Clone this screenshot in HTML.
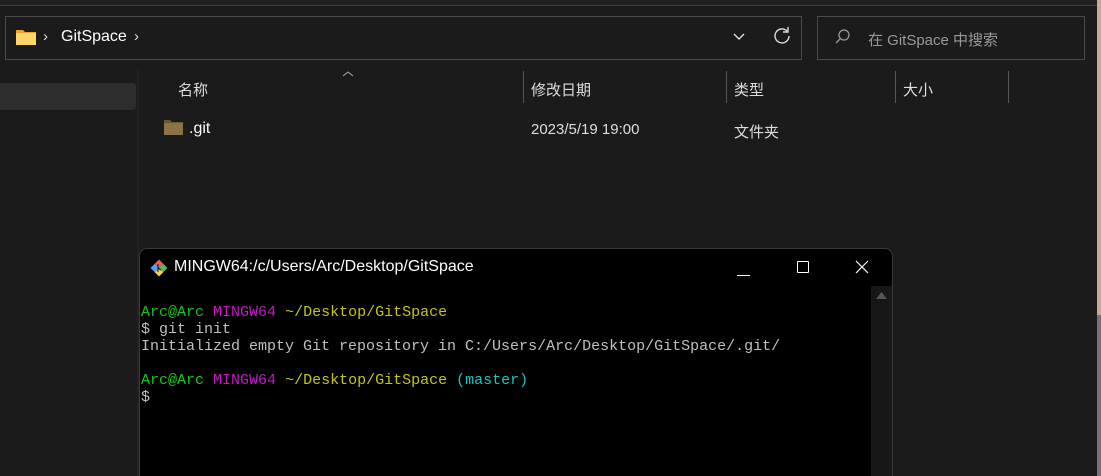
<!DOCTYPE html>
<html style="overflow:hidden;width:1101px;height:476px"><head><meta charset="utf-8"><style>
*{margin:0;padding:0;box-sizing:border-box}
body{width:1101px;height:476px;background:#1b1b1b;position:relative;overflow:hidden;font-family:"Segoe UI","Liberation Sans","Noto Sans CJK SC",sans-serif;color:#fff}
.abs{position:absolute}
.t{font-size:14px;white-space:nowrap}
.mono{font-family:"Liberation Mono","DejaVu Sans Mono",monospace;font-size:15px;line-height:17px;white-space:pre}
</style></head><body>
<div class="abs" style="left:0;top:0;width:1101px;height:5px;background:#202020"></div>
<div class="abs" style="left:0;top:5px;width:1097px;height:1px;background:#3a3a3a"></div>
<div class="abs" style="left:1097px;top:0;width:4px;height:315px;background:#c7a995"></div>
<div class="abs" style="left:1097px;top:315px;width:4px;height:161px;background:#7a7078"></div>
<div class="abs" style="left:5px;top:16px;width:797px;height:44px;border:1px solid #4a4a4a;background:#1b1b1b"></div>
<svg class="abs" style="left:16px;top:29px" width="20" height="17" viewBox="0 0 20 17"><path d="M0 1h7l2 2h11v13H0z" fill="#e8a92b"/><rect x="0" y="4" width="20" height="12" fill="#fcd66a"/></svg>
<div class="abs t" style="left:43px;top:28px;color:#ddd;font-size:15px">›</div>
<div class="abs t" style="left:61px;top:28px;font-size:16px;color:#fff">GitSpace</div>
<div class="abs t" style="left:134px;top:28px;color:#ddd;font-size:15px">›</div>
<svg class="abs" style="left:732px;top:32px" width="14" height="10"><path d="M2 2l5 5 5-5" stroke="#ddd" stroke-width="1.4" fill="none"/></svg>
<svg class="abs" style="left:773px;top:27px" width="18" height="18" viewBox="0 0 18 18"><path d="M14 4A7 7 0 1 0 16 9" stroke="#ddd" stroke-width="1.4" fill="none"/><path d="M10 3h5V-2" stroke="#ddd" stroke-width="1.4" fill="none" transform="translate(0,2)"/></svg>
<div class="abs" style="left:817px;top:16px;width:268px;height:44px;border:1px solid #4a4a4a"></div>
<svg class="abs" style="left:834px;top:28px" width="18" height="18"><circle cx="10" cy="7" r="5" stroke="#999" stroke-width="1.3" fill="none"/><path d="M6 11l-4 4" stroke="#999" stroke-width="1.3"/></svg>
<div class="abs t" style="left:868px;top:29px;color:#999;font-size:15px">在 GitSpace 中搜索</div>
<div class="abs" style="left:0;top:83px;width:136px;height:27px;background:#2d2d2d;border-radius:0 3px 3px 0"></div>
<div class="abs" style="left:137px;top:70px;width:2px;height:406px;background:#222"></div>
<svg class="abs" style="left:342px;top:70px" width="12" height="8"><path d="M1 6l5-4 5 4" stroke="#aaa" stroke-width="1" fill="none"/></svg>
<div class="abs t" style="left:178px;top:79px;color:#ddd;font-size:15px">名称</div>
<div class="abs" style="left:523px;top:71px;width:1px;height:32px;background:#555"></div>
<div class="abs t" style="left:531px;top:79px;color:#ddd;font-size:15px">修改日期</div>
<div class="abs" style="left:726px;top:71px;width:1px;height:32px;background:#555"></div>
<div class="abs t" style="left:734px;top:79px;color:#ddd;font-size:15px">类型</div>
<div class="abs" style="left:895px;top:71px;width:1px;height:32px;background:#555"></div>
<div class="abs t" style="left:903px;top:79px;color:#ddd;font-size:15px">大小</div>
<div class="abs" style="left:1008px;top:71px;width:1px;height:32px;background:#555"></div>
<svg class="abs" style="left:164px;top:120px" width="19" height="15"><path d="M0 0h6l2 2h11v13H0z" fill="#6a5530"/><rect x="0" y="3" width="19" height="12" fill="#8b7346"/></svg>
<div class="abs t" style="left:189px;top:120px;font-size:16px;color:#fff">.git</div>
<div class="abs t" style="left:531px;top:121px;color:#ddd;font-size:15px">2023/5/19 19:00</div>
<div class="abs t" style="left:734px;top:121px;color:#ddd;font-size:15px">文件夹</div>
<div class="abs" style="left:139px;top:248px;width:754px;height:240px;background:#000;border:1px solid #3a3a3a;border-radius:8px;overflow:hidden">
 <svg class="abs" style="left:9px;top:9px" width="20" height="20" viewBox="0 0 20 20">
  <g transform="rotate(45 10 10)"><rect x="4" y="4" width="6" height="6" fill="#e5605e"/><rect x="10" y="4" width="6" height="6" fill="#67b34f"/><rect x="4" y="10" width="6" height="6" fill="#5a9ef0"/><rect x="10" y="10" width="6" height="6" fill="#f2cf5a"/></g>
  <path d="M9 6v8M9 10l3 2" stroke="#222" stroke-width="1.2"/>
 </svg>
 <div class="abs t" style="left:34px;top:9px;font-size:16px;color:#fff">MINGW64:/c/Users/Arc/Desktop/GitSpace</div>
 <div class="abs" style="left:597px;top:26px;width:13px;height:1px;background:#fff"></div>
 <div class="abs" style="left:657px;top:12px;width:12px;height:12px;border:1.3px solid #fff;border-radius:1px"></div>
 <svg class="abs" style="left:715px;top:11px" width="14" height="14"><path d="M1 1l12 12M13 1L1 13" stroke="#fff" stroke-width="1.2"/></svg>
 <div class="abs" style="left:731px;top:37px;width:21px;height:200px;background:#171717"></div>
 <svg class="abs" style="left:736px;top:43px" width="11" height="8"><path d="M5.5 0L11 7H0z" fill="#555"/></svg>
 <div class="abs mono" style="left:1px;top:55px;color:#c0c0c0"><span style="color:#19c419">Arc@Arc</span> <span style="color:#c419c4">MINGW64</span> <span style="color:#c4c419">~/Desktop/GitSpace</span>
$ git init
Initialized empty Git repository in C:/Users/Arc/Desktop/GitSpace/.git/

<span style="color:#19c419">Arc@Arc</span> <span style="color:#c419c4">MINGW64</span> <span style="color:#c4c419">~/Desktop/GitSpace</span> <span style="color:#19c4c4">(master)</span>
$</div>
</div>
</body></html>
